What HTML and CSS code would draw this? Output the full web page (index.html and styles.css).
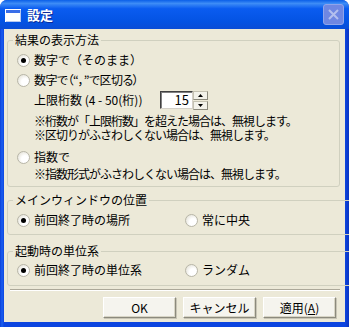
FILE: index.html
```html
<!DOCTYPE html>
<html>
<head>
    <meta charset="utf-8" />
    <title>設定</title>
    <link rel="stylesheet" href="styles.css">
</head>
<body>
    <div class="window">
        <div class="titlebar">
            <svg class="title-icon" width="16" height="13" viewBox="0 0 16 13">
                <rect x="0" y="0" width="16" height="13" fill="#fff"/>
                <rect x="1" y="1" width="14" height="3" fill="#3a6ee8"/>
                <rect x="15" y="1" width="1" height="12" fill="#b7c8f0"/>
                <rect x="1" y="12" width="15" height="1" fill="#b7c8f0"/>
            </svg>
            <span class="title-text">設定</span>
            <div class="close-btn">
                <svg width="19" height="19" viewBox="0 0 19 19">
                    <path d="M5 5 L14 14 M14 5 L5 14" stroke="#b3bfee" stroke-width="2"/>
                </svg>
            </div>
        </div>

        <div class="client">
            <fieldset class="group group-result">
                <legend>結果の表示方法</legend>
                <label class="radio-row radio-first"><span class="radio checked"></span>数字で（そのまま）</label>
                <label class="radio-row"><span class="radio"></span><span class="tight">数字で（“，”で区切る）</span></label>
                <div class="digits-row">
                    <span class="digits-label">上限桁数 (4 - 50(桁))</span>
                    <div class="spin">
                        <div class="spin-input">15</div>
                        <div class="spin-buttons">
                            <div class="spin-btn">
                                <svg width="5" height="3" viewBox="0 0 5 3"><path d="M2.5 0 L5 3 L0 3 Z" fill="#000"/></svg>
                            </div>
                            <div class="spin-btn">
                                <svg width="5" height="3" viewBox="0 0 5 3"><path d="M0 0 L5 0 L2.5 3 Z" fill="#000"/></svg>
                            </div>
                        </div>
                    </div>
                </div>
                <div class="note note-first">※桁数が「上限桁数」を超えた場合は、無視します。</div>
                <div class="note">※区切りがふさわしくない場合は、無視します。</div>
                <label class="radio-row radio-exp"><span class="radio"></span>指数で</label>
                <div class="note">※指数形式がふさわしくない場合は、無視します。</div>
            </fieldset>

            <fieldset class="group group-window">
                <legend>メインウィンドウの位置</legend>
                <div class="pair">
                    <label class="radio-row"><span class="radio checked"></span>前回終了時の場所</label>
                    <label class="radio-row"><span class="radio"></span>常に中央</label>
                </div>
            </fieldset>

            <fieldset class="group group-units">
                <legend>起動時の単位系</legend>
                <div class="pair">
                    <label class="radio-row"><span class="radio checked"></span>前回終了時の単位系</label>
                    <label class="radio-row"><span class="radio"></span>ランダム</label>
                </div>
            </fieldset>

            <div class="separator"></div>

            <div class="buttons">
                <button class="btn">OK</button>
                <button class="btn">キャンセル</button>
                <button class="btn">適用(<u>A</u>)</button>
            </div>
        </div>
    </div>
</body>
</html>
```

FILE: styles.css
```css
/* Общие стили */
body {
    margin: 0;
    font-family: "Noto Sans CJK JP", "Noto Sans", sans-serif;
    font-size: 12px;
    line-height: 14px;
    color: #000;
    background: #fff;
}

.window {
    width: 349px;
    height: 327px;
    box-sizing: border-box;
    display: flex;
    flex-direction: column;
    background: linear-gradient(90deg, #0a3fd8 0, #1a5ef0 2px, #0c45e0 4px, #0c45e0 345px, #0a34c0 349px);
    border-radius: 7px 7px 0 0;
    overflow: hidden;
}

.titlebar {
    height: 29px;
    flex: none;
    display: flex;
    align-items: center;
    padding: 0 5px 0 5px;
    background: linear-gradient(#0a5fe8 0%, #3d8cf6 12%, #0a5cf0 30%, #0453e3 75%, #0a4dd6 100%);
}

.title-icon {
    margin-right: 6px;
    margin-top: 1px;
}

.title-text {
    color: #fff;
    font-weight: bold;
    font-size: 13px;
    text-shadow: 1px 1px 0 #0a2a9a;
    flex: 1;
    margin-top: 1px;
}

.close-btn {
    width: 21px;
    height: 21px;
    border: 1px solid #8fa4ea;
    border-radius: 3px;
    background: #6f87e2;
    box-sizing: border-box;
    display: flex;
    align-items: center;
    justify-content: center;
}

.client {
    flex: 1;
    margin: 0 4px 5px 4px;
    background: #ece9d8;
    padding: 4px 5px 0 3px;
    display: flex;
    flex-direction: column;
}

.group {
    border: 1px solid #d0d0bf;
    border-radius: 3px;
    margin: 0;
    padding: 0 8px 0 9px;
}

.group legend {
    padding: 0 2px;
    margin-left: -4px;
    line-height: 14px;
}

.group-result {
    padding-bottom: 5px;
}

.group-window {
    margin-top: 6px;
    padding-bottom: 4px;
}

.group-window .pair {
    margin-top: 3px;
}

.group-units {
    margin-top: 9px;
    padding-bottom: 5px;
}

.group-units .pair {
    margin-top: 2px;
}

.radio-row {
    display: flex;
    align-items: center;
    height: 20px;
}

.radio-first {
    margin-top: 3px;
}

.radio {
    width: 11px;
    height: 11px;
    border-radius: 50%;
    border: 1px solid #b8b6a8;
    background: radial-gradient(circle at 65% 65%, #fff 35%, #dcd9cb 100%);
    margin-right: 4px;
    flex: none;
    position: relative;
}

.radio.checked::after {
    content: "";
    position: absolute;
    left: 3px;
    top: 3px;
    width: 5px;
    height: 5px;
    border-radius: 50%;
    background: #000;
}

.tight {
    font-feature-settings: "palt" 1;
    letter-spacing: -0.5px;
}

.digits-row {
    display: flex;
    align-items: center;
    padding-left: 17px;
    height: 20px;
}

.digits-label {
    width: 126px;
}

.spin {
    display: flex;
    align-items: center;
}

.spin-input {
    width: 28px;
    height: 16px;
    border: 1px solid #404040;
    border-right-color: #d4d0c8;
    border-bottom-color: #d4d0c8;
    box-shadow: inset 1px 1px 0 #808080;
    background: #fff;
    text-align: right;
    padding-right: 3px;
    line-height: 16px;
    font-size: 13px;
}

.spin-buttons {
    display: flex;
    flex-direction: column;
    gap: 1px;
}

.spin-btn {
    width: 13px;
    height: 7px;
    border: 1px solid #c5c2b2;
    border-right-color: #8c8a7d;
    border-bottom-color: #8c8a7d;
    background: #f3f2ea;
    display: flex;
    align-items: center;
    justify-content: center;
}

.note {
    padding-left: 17px;
    height: 14px;
    letter-spacing: -1px;
}

.note-first {
    margin-top: 4px;
}

.radio-exp {
    margin-top: 5px;
}

.pair {
    display: flex;
}

.pair .radio-row {
    width: 168px;
}

.separator {
    border-top: 1px solid #aca899;
    border-bottom: 1px solid #fff;
    margin-top: 3px;
    margin-left: 3px;
}

.buttons {
    display: flex;
    justify-content: flex-end;
    gap: 7px;
    padding-top: 6px;
    padding-right: 4px;
}

.btn {
    width: 73px;
    height: 21px;
    font-family: inherit;
    font-size: 12px;
    line-height: 14px;
    background: #f5f4ee;
    border: 1px solid #fff;
    border-right-color: #8c8a7d;
    border-bottom-color: #8c8a7d;
    box-shadow: 1px 1px 0 #c8c5b6, inset -1px -1px 0 #d8d5c6;
    padding: 0;
}
```
